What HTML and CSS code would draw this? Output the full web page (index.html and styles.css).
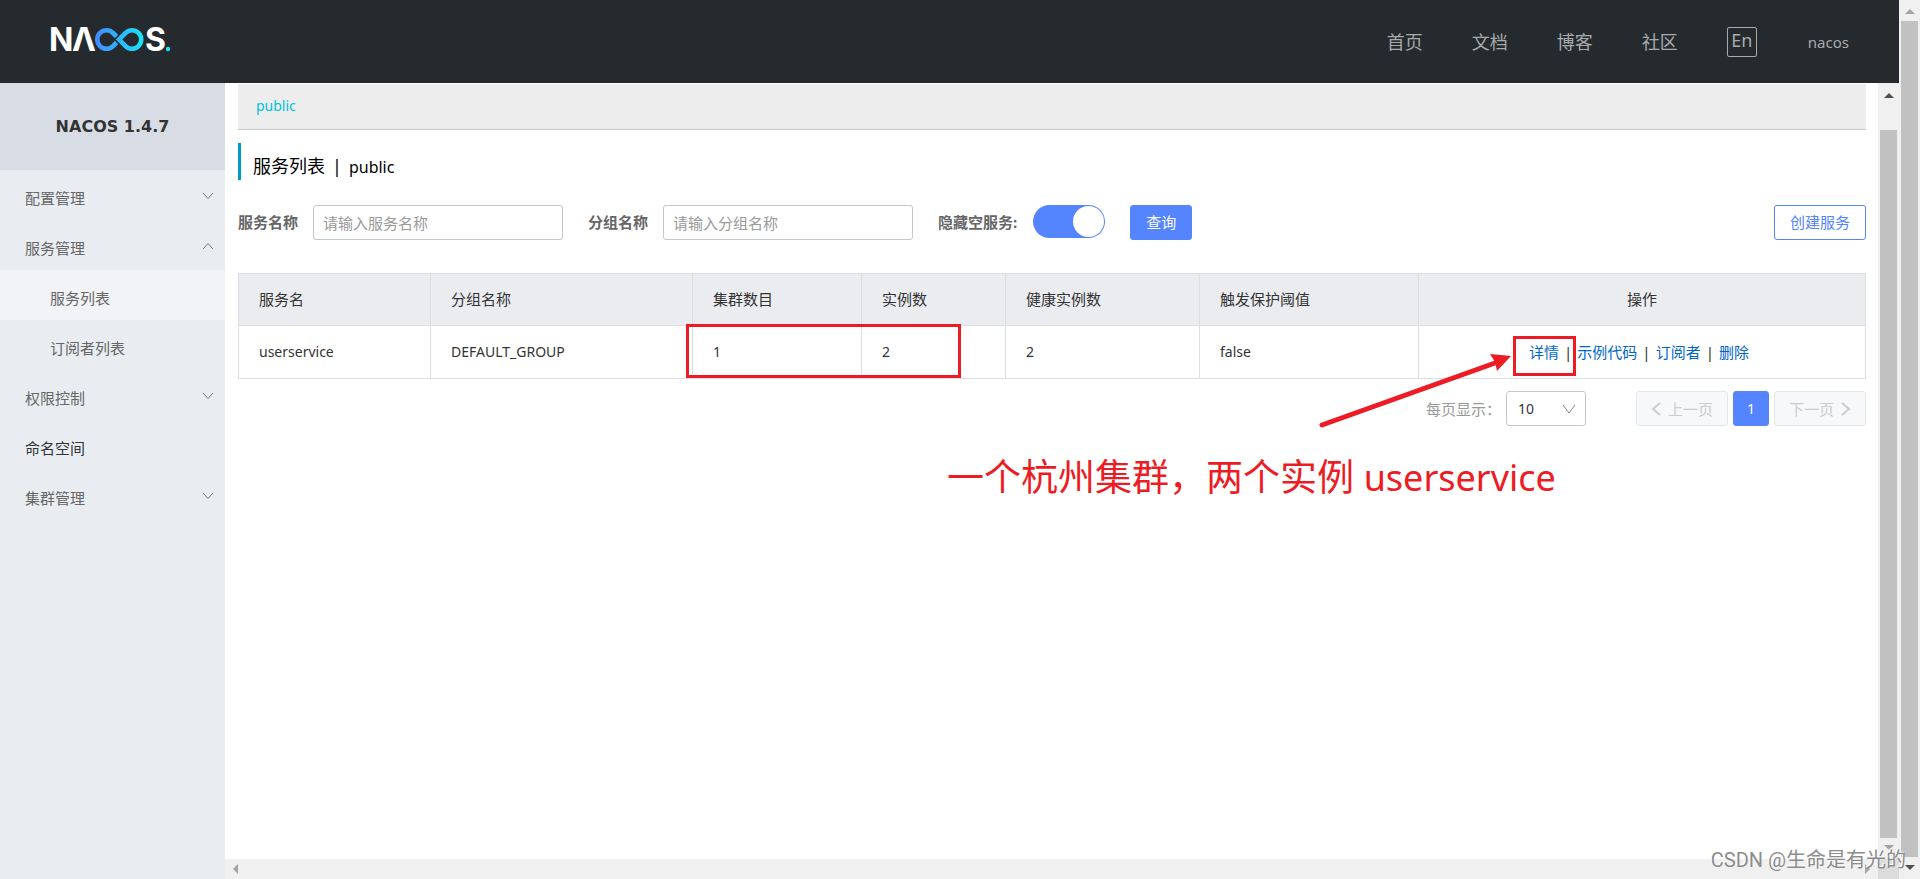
FILE: index.html
```html
<!DOCTYPE html>
<html lang="zh-CN">
<head>
<meta charset="utf-8">
<title>Nacos</title>
<link rel="stylesheet" href="styles.css">
</head>
<body>
<div class="window">
  <div class="page">
    <header class="topbar">
      <a class="brand" href="#" aria-label="NACOS">
        <svg class="logo" viewBox="0 0 124 44" width="124" height="44">
          <defs>
            <linearGradient id="loop" gradientUnits="userSpaceOnUse" x1="46" y1="0" x2="95" y2="0">
              <stop offset="0" stop-color="#4489fe"/>
              <stop offset="1" stop-color="#1ae5f6"/>
            </linearGradient>
          </defs>
          <text class="logo-text" x="0" y="31">N</text>
          <text class="logo-text" x="23" y="31">Λ</text>
          <path d="M67.500 16.500L64 13A9.200 9.200 0 1 0 64 26L67.500 22.500" fill="none" stroke="url(#loop)" stroke-width="4.600"/>
          <path d="M70 19.500L76.500 13A9.200 9.200 0 1 1 76.500 26Z" fill="none" stroke="url(#loop)" stroke-width="4.600"/>
          <text class="logo-text" x="96" y="31">S</text>
          <circle cx="119" cy="29" r="2.200" fill="#1ae5f6"/>
        </svg>
      </a>
      <nav class="topnav">
        <a href="#">首页</a>
        <a href="#">文档</a>
        <a href="#">博客</a>
        <a href="#">社区</a>
        <button class="lang" type="button">En</button>
        <a class="user" href="#">nacos</a>
      </nav>
    </header>
    <div class="workspace">
      <aside class="sidebar">
        <h1 class="version">NACOS 1.4.7</h1>
        <nav class="menu">
          <a class="item" href="#">配置管理<svg class="chev" viewBox="0 0 12 8"><path d="M1 1l5 5.500 5-5.500"/></svg></a>
          <a class="item" href="#">服务管理<svg class="chev" viewBox="0 0 12 8"><path d="M1 7l5-5.500 5 5.500"/></svg></a>
          <a class="item sub active" href="#">服务列表</a>
          <a class="item sub" href="#">订阅者列表</a>
          <a class="item" href="#">权限控制<svg class="chev" viewBox="0 0 12 8"><path d="M1 1l5 5.500 5-5.500"/></svg></a>
          <a class="item dark" href="#">命名空间</a>
          <a class="item" href="#">集群管理<svg class="chev" viewBox="0 0 12 8"><path d="M1 1l5 5.500 5-5.500"/></svg></a>
        </nav>
      </aside>
      <div class="pane">
        <main class="content">
          <div class="namespace"><a href="#">public</a></div>
          <h2 class="title">服务列表<span class="bar">|</span><span class="ns">public</span></h2>
          <form class="search">
            <label for="svc">服务名称</label>
            <input class="box" id="svc" type="text" placeholder="请输入服务名称">
            <label class="second" for="grp">分组名称</label>
            <input class="box" id="grp" type="text" placeholder="请输入分组名称">
            <label class="second" for="hide">隐藏空服务:</label>
            <input class="switch" id="hide" type="checkbox" role="switch" checked>
            <button class="btn primary" type="button">查询</button>
            <button class="btn outline" type="button">创建服务</button>
          </form>
          <table class="grid">
            <colgroup><col class="c1"><col class="c2"><col class="c3"><col class="c4"><col class="c5"><col class="c6"><col class="c7"></colgroup>
            <thead>
              <tr><th>服务名</th><th>分组名称</th><th>集群数目</th><th>实例数</th><th>健康实例数</th><th>触发保护阈值</th><th class="ops">操作</th></tr>
            </thead>
            <tbody>
              <tr><td>userservice</td><td>DEFAULT_GROUP</td><td>1</td><td>2</td><td>2</td><td>false</td>
              <td class="ops"><div class="links"><a href="#">详情</a><span>|</span><a href="#">示例代码</a><span>|</span><a href="#">订阅者</a><span>|</span><a href="#">删除</a></div></td></tr>
            </tbody>
          </table>
          <div class="pager">
            <label for="size">每页显示：</label>
            <span class="size-wrap">
              <select class="size" id="size"><option>10</option></select>
              <svg class="size-arrow" viewBox="0 0 14 10"><path d="M1 1l6 8 6-8"/></svg>
            </span>
            <button class="btn page-btn" type="button" disabled><svg class="arrow" viewBox="0 0 10 14"><path d="M9 1L2 7l7 6"/></svg>上一页</button>
            <button class="btn primary current" type="button">1</button>
            <button class="btn page-btn" type="button" disabled>下一页<svg class="arrow" viewBox="0 0 10 14"><path d="M1 1l7 6-7 6"/></svg></button>
          </div>
        </main>
        <div class="vscroll inner"><i class="up dark"></i><b class="thumb"></b><i class="down"></i></div>
        <div class="hscroll"><i class="left"></i><i class="right"></i></div>
        <div class="corner"></div>
      </div>
    </div>
  </div>
  <div class="vscroll outer"><i class="up"></i><b class="thumb"></b><i class="down dark"></i></div>
</div>
<div class="mark mark-counts"></div>
<div class="mark mark-detail"></div>
<svg class="pointer" viewBox="0 0 200 80" width="200" height="80">
  <path d="M7 75L180 13" stroke="#ed1c24" stroke-width="5" stroke-linecap="round"/>
  <path d="M196 6L175 4L180 12L182 21Z" fill="#ed1c24"/>
</svg>
<p class="note">一个杭州集群，两个实例 <span class="note-name">userservice</span></p>
<p class="watermark">CSDN @生命是有光的</p>
</body>
</html>
```
FILE: styles.css
```css
* { box-sizing: border-box; }
body {
  margin: 0;
  font: 14px/20px "Noto Sans", "Noto Sans CJK SC", sans-serif;
  color: #333;
  background: #fff;
  overflow: hidden;
}
a { color: inherit; text-decoration: none; }
button, input, select { font: inherit; }
.window { display: flex; height: 100vh; }
.page { flex: 1; min-width: 0; display: flex; flex-direction: column; }

.topbar {
  height: 83px;
  flex: none;
  background: #252a2f;
  display: flex;
  align-items: center;
  justify-content: space-between;
  padding: 0 50px 0 49px;
}
.brand { display: flex; }
.logo-text { font: 700 32px Inter, sans-serif; fill: #fff; }
.topnav { display: flex; align-items: center; gap: 49px; font-size: 18px; line-height: 26px; color: #a8aaac; }
.lang {
  width: 30px;
  height: 30px;
  padding: 0 0 4px;
  border: 1px solid #a8aaac;
  border-radius: 2px;
  background: none;
  color: inherit;
  line-height: 22px;
}
.user { font-size: 15px; margin-left: 2px; }

.workspace { flex: 1; min-height: 0; display: flex; }
.sidebar { width: 225px; flex: none; background: #e9edf2; }
.version {
  margin: 0;
  height: 87px;
  background: #d8dde5;
  font-family: "DejaVu Sans", sans-serif;
  font-size: 16px;
  line-height: 87px;
  text-align: center;
}
.menu { font-size: 15px; color: #666; }
.item {
  display: flex;
  align-items: center;
  justify-content: space-between;
  height: 50px;
  padding: 5px 11px 0 25px;
}
.item.sub { padding-left: 50px; }
.active { background: #f1f3f7; }
.dark { color: #333; }
.chev { width: 12px; height: 8px; margin-bottom: 4px; fill: none; stroke: #777; stroke-width: 1; }

.pane {
  flex: 1;
  min-width: 0;
  display: grid;
  grid-template-columns: 1fr 21px;
  grid-template-rows: 1fr 20px;
}
.content { padding: 1px 12px 0 13px; min-width: 0; }
.namespace {
  height: 46px;
  padding: 0 18px;
  border-bottom: 1px solid #c8c8c8;
  background: #ededed;
  color: #00c1de;
  line-height: 44px;
}
.title {
  margin: 13px 0 25px;
  height: 37px;
  padding: 5px 0 0 12px;
  border-left: 3px solid #09c;
  font-size: 18px;
  font-weight: 400;
  line-height: 36px;
  color: #000;
}
.bar { margin: 0 7px; }
.ns { font-size: 16px; }
.search { display: flex; align-items: flex-start; margin-bottom: 33px; }
.search label { font-size: 15px; font-weight: 700; line-height: 35px; color: #666; margin-right: 15px; }
.search .second { margin-left: 25px; }
.box {
  width: 250px;
  height: 35px;
  padding: 0 9px;
  border: 1px solid #c4c6cf;
  border-radius: 3px;
  font-size: 15px;
  color: #333;
}
.box::placeholder { color: #999; opacity: 1; }
.switch {
  appearance: none;
  width: 72px;
  height: 33px;
  margin: 0 25px 0 1px;
  border-radius: 17px;
  background: #5584ff;
  display: flex;
  justify-content: flex-end;
  padding: 1px;
}
.switch::before { content: ""; width: 31px; height: 31px; border-radius: 50%; background: #fff; }
.btn {
  height: 35px;
  padding: 0 15px 2px;
  border: 1px solid #5584ff;
  border-radius: 3px;
  font-size: 15px;
  line-height: 20px;
  white-space: nowrap;
}
.primary { background: #5584ff; color: #fff; }
.outline { margin-left: auto; background: #fff; color: #5584ff; }

.grid { width: 100%; border-collapse: collapse; table-layout: fixed; }
.grid th, .grid td { border: 1px solid #dcdee3; padding: 0 20px; text-align: left; }
.grid th { height: 52px; padding-bottom: 2px; background: #ebecf0; font-size: 15px; font-weight: 400; }
.grid td { height: 53px; }
.grid .ops { text-align: center; }
.c1 { width: 192px; }
.c2 { width: 262px; }
.c3 { width: 169px; }
.c4 { width: 144px; }
.c5 { width: 194px; }
.c6 { width: 219px; }
.links { display: flex; justify-content: center; gap: 5px; font-size: 15px; padding-right: 6px; }
.links a { color: #06c; }

.pager { display: flex; align-items: center; justify-content: flex-end; margin-top: 12px; font-size: 15px; color: #999; }
.size-wrap { position: relative; display: block; margin: 0 50px 0 5px; }
.size {
  appearance: none;
  display: block;
  width: 80px;
  height: 35px;
  padding: 0 11px;
  border: 1px solid #c4c6cf;
  border-radius: 3px;
  background: #fff;
  color: #333;
  font-size: 14px;
}
.size-arrow { position: absolute; right: 10px; top: 13px; width: 14px; height: 10px; fill: none; stroke: #888; }
.page-btn {
  display: flex;
  align-items: center;
  gap: 7px;
  width: 92px;
  padding: 0 14px;
  border-color: #e6e7eb;
  background: #f7f8fa;
  color: #ccc;
}
.arrow { width: 10px; height: 14px; flex: none; fill: none; stroke: #ccc; stroke-width: 2; }
.current { width: 36px; margin: 0 5px; padding: 0; font-size: 14px; }

.vscroll { width: 21px; flex: none; background: #f0f0f0; display: flex; flex-direction: column; align-items: center; }
.vscroll .thumb { width: 17px; flex: 1; background: #c1c1c1; }
.vscroll i, .hscroll i { border: 5px solid transparent; }
.vscroll .up { border-top: 0; border-bottom-color: #a3a3a3; }
.vscroll .down { border-bottom: 0; border-top-color: #a3a3a3; }
.vscroll .up.dark { border-bottom-color: #505050; }
.vscroll .down.dark { border-top-color: #505050; }
.outer .up { margin: 9px 0 7px; }
.outer .down { margin: 8px 0 9px; }
.inner .up { margin: 10px 0 32px; }
.inner .down { margin: 7px 0 9px; }
.hscroll { background: #f0f0f0; display: flex; justify-content: space-between; align-items: center; padding: 0 8px; }
.hscroll .left { border-left: 0; border-right-color: #a3a3a3; }
.hscroll .right { border-right: 0; border-left-color: #a3a3a3; }
.corner { background: #dcdcdc; }

.mark { position: absolute; border: 3px solid #ed1c24; }
.mark-counts { left: 686px; top: 324px; width: 275px; height: 54px; }
.mark-detail { left: 1513px; top: 336px; width: 63px; height: 40px; }
.pointer { position: absolute; left: 1315px; top: 350px; fill: none; }
.note {
  position: absolute;
  left: 947px;
  top: 452px;
  margin: 0;
  font-size: 37px;
  line-height: 50px;
  color: #ed1c24;
  white-space: nowrap;
}
.note-name { font-size: 36px; }
.watermark {
  position: absolute;
  right: 14px;
  top: 846px;
  margin: 0;
  font-family: Roboto, "Noto Sans CJK SC", sans-serif;
  font-size: 20px;
  line-height: 28px;
  color: #8c8c8c;
  text-shadow: -1px -1px 0 #fff;
  white-space: nowrap;
}
```
